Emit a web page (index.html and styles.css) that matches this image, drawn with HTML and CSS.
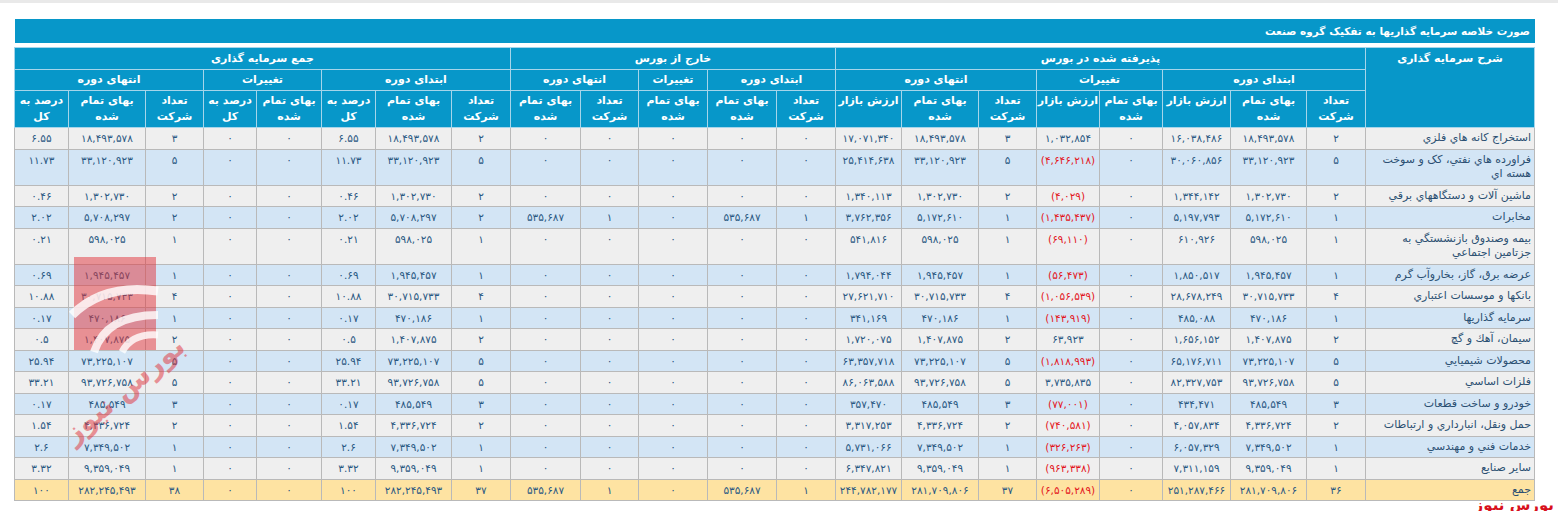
FILE: index.html
```html
<!DOCTYPE html>
<html lang="fa" dir="rtl">
<head>
<meta charset="utf-8">
<title>صورت خلاصه سرمایه گذاریها</title>
<link rel="stylesheet" href="styles.css">
</head>
<body>
<div class="topline"></div>
<div class="wrap">
  <div class="title">صورت خلاصه سرمایه گذاریها به تفکیک گروه صنعت</div>
  <table class="grid">
    <colgroup>
      <col class="k169"><col class="k59"><col class="k76"><col class="k68"><col class="k63"><col class="k63"><col class="k58"><col class="k77"><col class="k66"><col class="k59"><col class="k69"><col class="k69"><col class="k58"><col class="k70"><col class="k59"><col class="k76"><col class="k54"><col class="k65"><col class="k53"><col class="k58"><col class="k77"><col class="k54">
    </colgroup>
    <thead>
      <tr class="hr1">
        <th rowspan="3" class="desc">شرح سرمایه گذاری</th>
        <th colspan="8">پذیرفته شده در بورس</th>
        <th colspan="5">خارج از بورس</th>
        <th colspan="8">جمع سرمایه گذاری</th>
      </tr>
      <tr class="hr2">
        <th colspan="3">ابتدای دوره</th>
        <th colspan="2">تغییرات</th>
        <th colspan="3">انتهای دوره</th>
        <th colspan="2">ابتدای دوره</th>
        <th>تغییرات</th>
        <th colspan="2">انتهای دوره</th>
        <th colspan="3">ابتدای دوره</th>
        <th colspan="2">تغییرات</th>
        <th colspan="3">انتهای دوره</th>
      </tr>
      <tr class="hr3">
        <th>تعداد<br>شرکت</th><th>بهای تمام<br>شده</th><th>ارزش بازار</th>
        <th>بهای تمام<br>شده</th><th>ارزش بازار</th>
        <th>تعداد<br>شرکت</th><th>بهای تمام<br>شده</th><th>ارزش بازار</th>
        <th>تعداد<br>شرکت</th><th>بهای تمام<br>شده</th>
        <th>بهای تمام<br>شده</th>
        <th>تعداد<br>شرکت</th><th>بهای تمام<br>شده</th>
        <th>تعداد<br>شرکت</th><th>بهای تمام<br>شده</th><th>درصد به<br>کل</th>
        <th>بهای تمام<br>شده</th><th>درصد به<br>کل</th>
        <th>تعداد<br>شرکت</th><th>بهای تمام<br>شده</th><th>درصد به<br>کل</th>
      </tr>
    </thead>
    <tbody>
      <tr class="o"><td class="n">استخراج کانه هاي فلزي</td><td>۲</td><td>۱۸,۴۹۳,۵۷۸</td><td>۱۶,۰۳۸,۴۸۶</td><td>۰</td><td>۱,۰۳۲,۸۵۴</td><td>۳</td><td>۱۸,۴۹۳,۵۷۸</td><td>۱۷,۰۷۱,۳۴۰</td><td>۰</td><td>۰</td><td>۰</td><td>۰</td><td>۰</td><td>۲</td><td>۱۸,۴۹۳,۵۷۸</td><td>۶.۵۵</td><td>۰</td><td>۰</td><td>۳</td><td>۱۸,۴۹۳,۵۷۸</td><td>۶.۵۵</td></tr>
      <tr class="e"><td class="n">فراورده هاي نفتي، کک و سوخت<br>هسته اي</td><td>۵</td><td>۳۳,۱۲۰,۹۲۳</td><td>۳۰,۰۶۰,۸۵۶</td><td>۰</td><td class="neg">(۴,۶۴۶,۲۱۸)</td><td>۵</td><td>۳۳,۱۲۰,۹۲۳</td><td>۲۵,۴۱۴,۶۳۸</td><td>۰</td><td>۰</td><td>۰</td><td>۰</td><td>۰</td><td>۵</td><td>۳۳,۱۲۰,۹۲۳</td><td>۱۱.۷۳</td><td>۰</td><td>۰</td><td>۵</td><td>۳۳,۱۲۰,۹۲۳</td><td>۱۱.۷۳</td></tr>
      <tr class="o"><td class="n">ماشين آلات و دستگاههاي برقي</td><td>۲</td><td>۱,۳۰۲,۷۳۰</td><td>۱,۳۴۴,۱۴۲</td><td>۰</td><td class="neg">(۴,۰۲۹)</td><td>۲</td><td>۱,۳۰۲,۷۳۰</td><td>۱,۳۴۰,۱۱۳</td><td>۰</td><td>۰</td><td>۰</td><td>۰</td><td>۰</td><td>۲</td><td>۱,۳۰۲,۷۳۰</td><td>۰.۴۶</td><td>۰</td><td>۰</td><td>۲</td><td>۱,۳۰۲,۷۳۰</td><td>۰.۴۶</td></tr>
      <tr class="e"><td class="n">مخابرات</td><td>۱</td><td>۵,۱۷۲,۶۱۰</td><td>۵,۱۹۷,۷۹۳</td><td>۰</td><td class="neg">(۱,۴۳۵,۴۳۷)</td><td>۱</td><td>۵,۱۷۲,۶۱۰</td><td>۳,۷۶۲,۳۵۶</td><td>۱</td><td>۵۳۵,۶۸۷</td><td>۰</td><td>۱</td><td>۵۳۵,۶۸۷</td><td>۲</td><td>۵,۷۰۸,۲۹۷</td><td>۲.۰۲</td><td>۰</td><td>۰</td><td>۲</td><td>۵,۷۰۸,۲۹۷</td><td>۲.۰۲</td></tr>
      <tr class="o"><td class="n">بيمه وصندوق بازنشستگي به<br>جزتامين اجتماعي</td><td>۱</td><td>۵۹۸,۰۲۵</td><td>۶۱۰,۹۲۶</td><td>۰</td><td class="neg">(۶۹,۱۱۰)</td><td>۱</td><td>۵۹۸,۰۲۵</td><td>۵۴۱,۸۱۶</td><td>۰</td><td>۰</td><td>۰</td><td>۰</td><td>۰</td><td>۱</td><td>۵۹۸,۰۲۵</td><td>۰.۲۱</td><td>۰</td><td>۰</td><td>۱</td><td>۵۹۸,۰۲۵</td><td>۰.۲۱</td></tr>
      <tr class="e"><td class="n">عرضه برق، گاز، بخاروآب گرم</td><td>۱</td><td>۱,۹۴۵,۴۵۷</td><td>۱,۸۵۰,۵۱۷</td><td>۰</td><td class="neg">(۵۶,۴۷۳)</td><td>۱</td><td>۱,۹۴۵,۴۵۷</td><td>۱,۷۹۴,۰۴۴</td><td>۰</td><td>۰</td><td>۰</td><td>۰</td><td>۰</td><td>۱</td><td>۱,۹۴۵,۴۵۷</td><td>۰.۶۹</td><td>۰</td><td>۰</td><td>۱</td><td>۱,۹۴۵,۴۵۷</td><td>۰.۶۹</td></tr>
      <tr class="o"><td class="n">بانكها و موسسات اعتباري</td><td>۴</td><td>۳۰,۷۱۵,۷۳۳</td><td>۲۸,۶۷۸,۲۴۹</td><td>۰</td><td class="neg">(۱,۰۵۶,۵۳۹)</td><td>۴</td><td>۳۰,۷۱۵,۷۳۳</td><td>۲۷,۶۲۱,۷۱۰</td><td>۰</td><td>۰</td><td>۰</td><td>۰</td><td>۰</td><td>۴</td><td>۳۰,۷۱۵,۷۳۳</td><td>۱۰.۸۸</td><td>۰</td><td>۰</td><td>۴</td><td>۳۰,۷۱۵,۷۳۳</td><td>۱۰.۸۸</td></tr>
      <tr class="e"><td class="n">سرمايه گذاريها</td><td>۱</td><td>۴۷۰,۱۸۶</td><td>۴۸۵,۰۸۸</td><td>۰</td><td class="neg">(۱۴۳,۹۱۹)</td><td>۱</td><td>۴۷۰,۱۸۶</td><td>۳۴۱,۱۶۹</td><td>۰</td><td>۰</td><td>۰</td><td>۰</td><td>۰</td><td>۱</td><td>۴۷۰,۱۸۶</td><td>۰.۱۷</td><td>۰</td><td>۰</td><td>۱</td><td>۴۷۰,۱۸۶</td><td>۰.۱۷</td></tr>
      <tr class="o"><td class="n">سيمان، آهك و گچ</td><td>۲</td><td>۱,۴۰۷,۸۷۵</td><td>۱,۶۵۶,۱۵۲</td><td>۰</td><td>۶۳,۹۲۳</td><td>۲</td><td>۱,۴۰۷,۸۷۵</td><td>۱,۷۲۰,۰۷۵</td><td>۰</td><td>۰</td><td>۰</td><td>۰</td><td>۰</td><td>۲</td><td>۱,۴۰۷,۸۷۵</td><td>۰.۵</td><td>۰</td><td>۰</td><td>۲</td><td>۱,۴۰۷,۸۷۵</td><td>۰.۵</td></tr>
      <tr class="e"><td class="n">محصولات شيميايي</td><td>۵</td><td>۷۳,۲۲۵,۱۰۷</td><td>۶۵,۱۷۶,۷۱۱</td><td>۰</td><td class="neg">(۱,۸۱۸,۹۹۳)</td><td>۵</td><td>۷۳,۲۲۵,۱۰۷</td><td>۶۳,۳۵۷,۷۱۸</td><td>۰</td><td>۰</td><td>۰</td><td>۰</td><td>۰</td><td>۵</td><td>۷۳,۲۲۵,۱۰۷</td><td>۲۵.۹۴</td><td>۰</td><td>۰</td><td>۵</td><td>۷۳,۲۲۵,۱۰۷</td><td>۲۵.۹۴</td></tr>
      <tr class="o"><td class="n">فلزات اساسي</td><td>۵</td><td>۹۳,۷۲۶,۷۵۸</td><td>۸۲,۳۲۷,۷۵۳</td><td>۰</td><td>۳,۷۳۵,۸۳۵</td><td>۵</td><td>۹۳,۷۲۶,۷۵۸</td><td>۸۶,۰۶۳,۵۸۸</td><td>۰</td><td>۰</td><td>۰</td><td>۰</td><td>۰</td><td>۵</td><td>۹۳,۷۲۶,۷۵۸</td><td>۳۳.۲۱</td><td>۰</td><td>۰</td><td>۵</td><td>۹۳,۷۲۶,۷۵۸</td><td>۳۳.۲۱</td></tr>
      <tr class="e"><td class="n">خودرو و ساخت قطعات</td><td>۳</td><td>۴۸۵,۵۴۹</td><td>۴۳۴,۴۷۱</td><td>۰</td><td class="neg">(۷۷,۰۰۱)</td><td>۳</td><td>۴۸۵,۵۴۹</td><td>۳۵۷,۴۷۰</td><td>۰</td><td>۰</td><td>۰</td><td>۰</td><td>۰</td><td>۳</td><td>۴۸۵,۵۴۹</td><td>۰.۱۷</td><td>۰</td><td>۰</td><td>۳</td><td>۴۸۵,۵۴۹</td><td>۰.۱۷</td></tr>
      <tr class="o"><td class="n">حمل ونقل، انبارداري و ارتباطات</td><td>۲</td><td>۴,۳۳۶,۷۲۴</td><td>۴,۰۵۷,۸۳۴</td><td>۰</td><td class="neg">(۷۴۰,۵۸۱)</td><td>۲</td><td>۴,۳۳۶,۷۲۴</td><td>۳,۳۱۷,۲۵۳</td><td>۰</td><td>۰</td><td>۰</td><td>۰</td><td>۰</td><td>۲</td><td>۴,۳۳۶,۷۲۴</td><td>۱.۵۴</td><td>۰</td><td>۰</td><td>۲</td><td>۴,۳۳۶,۷۲۴</td><td>۱.۵۴</td></tr>
      <tr class="e"><td class="n">خدمات فني و مهندسي</td><td>۱</td><td>۷,۳۴۹,۵۰۲</td><td>۶,۰۵۷,۳۲۹</td><td>۰</td><td class="neg">(۳۲۶,۲۶۳)</td><td>۱</td><td>۷,۳۴۹,۵۰۲</td><td>۵,۷۳۱,۰۶۶</td><td>۰</td><td>۰</td><td>۰</td><td>۰</td><td>۰</td><td>۱</td><td>۷,۳۴۹,۵۰۲</td><td>۲.۶</td><td>۰</td><td>۰</td><td>۱</td><td>۷,۳۴۹,۵۰۲</td><td>۲.۶</td></tr>
      <tr class="o"><td class="n">ساير صنايع</td><td>۱</td><td>۹,۳۵۹,۰۴۹</td><td>۷,۳۱۱,۱۵۹</td><td>۰</td><td class="neg">(۹۶۳,۳۳۸)</td><td>۱</td><td>۹,۳۵۹,۰۴۹</td><td>۶,۳۴۷,۸۲۱</td><td>۰</td><td>۰</td><td>۰</td><td>۰</td><td>۰</td><td>۱</td><td>۹,۳۵۹,۰۴۹</td><td>۳.۳۲</td><td>۰</td><td>۰</td><td>۱</td><td>۹,۳۵۹,۰۴۹</td><td>۳.۳۲</td></tr>
      <tr class="t"><td class="n">جمع</td><td>۳۶</td><td>۲۸۱,۷۰۹,۸۰۶</td><td>۲۵۱,۲۸۷,۴۶۶</td><td>۰</td><td class="neg">(۶,۵۰۵,۲۸۹)</td><td>۳۷</td><td>۲۸۱,۷۰۹,۸۰۶</td><td>۲۴۴,۷۸۲,۱۷۷</td><td>۱</td><td>۵۳۵,۶۸۷</td><td>۰</td><td>۱</td><td>۵۳۵,۶۸۷</td><td>۳۷</td><td>۲۸۲,۲۴۵,۴۹۳</td><td>۱۰۰</td><td>۰</td><td>۰</td><td>۳۸</td><td>۲۸۲,۲۴۵,۴۹۳</td><td>۱۰۰</td></tr>
    </tbody>
  </table>
  <div class="brand">بورس نیوز</div>
  <svg class="watermark" width="130" height="200" viewBox="0 0 130 200" aria-hidden="true">
    <rect x="0" y="0" width="82" height="93" fill="#e2323a" opacity="0.5"/>
    <path d="M-2 58 Q30 26 84 34" fill="none" stroke="#ffffff" stroke-width="9" opacity="0.8"/>
    <path d="M20 95 Q32 58 84 58" fill="none" stroke="#ffffff" stroke-width="8" opacity="0.8"/>
    <path d="M48 95 Q58 76 84 78" fill="none" stroke="#ffffff" stroke-width="7" opacity="0.8"/>
    <text x="56" y="140" transform="rotate(-40 56 140)" text-anchor="middle" class="wmtext">بورس نیوز</text>
  </svg>
</div>
</body>
</html>
```
FILE: styles.css
```css
html, body {
  margin: 0;
  padding: 0;
  background: #ffffff;
}
body {
  font-family: "DejaVu Sans", Tahoma, sans-serif;
}
.topline {
  height: 3px;
  background: #e9e9e9;
}
.wrap {
  position: relative;
  direction: rtl;
  width: 1520px;
  margin: 16px 23px 0 15px;
}
.title {
  height: 24px;
  line-height: 24px;
  background: #0797c9;
  color: #ffffff;
  font-weight: bold;
  font-size: 10.5px;
  padding-right: 5px;
  margin-bottom: 4px;
}
.grid {
  width: 1520px;
  border-collapse: collapse;
  table-layout: fixed;
}
.k169 { width: 169px; }
.k76 { width: 76px; }
.k77 { width: 77px; }
.k70 { width: 70px; }
.k69 { width: 69px; }
.k68 { width: 68px; }
.k66 { width: 66px; }
.k65 { width: 65px; }
.k63 { width: 63px; }
.k59 { width: 59px; }
.k58 { width: 58px; }
.k54 { width: 54px; }
.k53 { width: 53px; }
.grid th {
  background: #0797c9;
  color: #ffffff;
  font-weight: bold;
  font-size: 11px;
  line-height: 16px;
  padding: 2px 1px;
  border: 1px solid #a6d5ea;
  vertical-align: top;
  text-align: center;
  white-space: nowrap;
}
.hr1 th {
  padding-top: 3px;
}
.grid td {
  font-size: 10.5px;
  line-height: 14.5px;
  padding: 3px 3px;
  border: 1px solid #b9b9b9;
  text-align: center;
  vertical-align: top;
  color: #2a5882;
}
.grid td.n {
  text-align: right;
  font-size: 11px;
  color: #2b4f72;
}
.grid td.neg {
  color: #e3161d;
}
tr.o td { background: #efefef; }
tr.e td { background: #d3e5f5; }
tr.t td { background: #fee3a2; }
.brand {
  position: relative;
  margin-top: -2px;
  margin-right: -19px;
  font-size: 15px;
  line-height: 12px;
  font-weight: bold;
  color: #d8101c;
}
.watermark {
  position: absolute;
  left: 59px;
  top: 238px;
  overflow: visible;
  pointer-events: none;
}
.wmtext {
  font-family: "DejaVu Sans", sans-serif;
  font-size: 28px;
  font-weight: bold;
  fill: #e0323a;
  opacity: 0.5;
}
```
